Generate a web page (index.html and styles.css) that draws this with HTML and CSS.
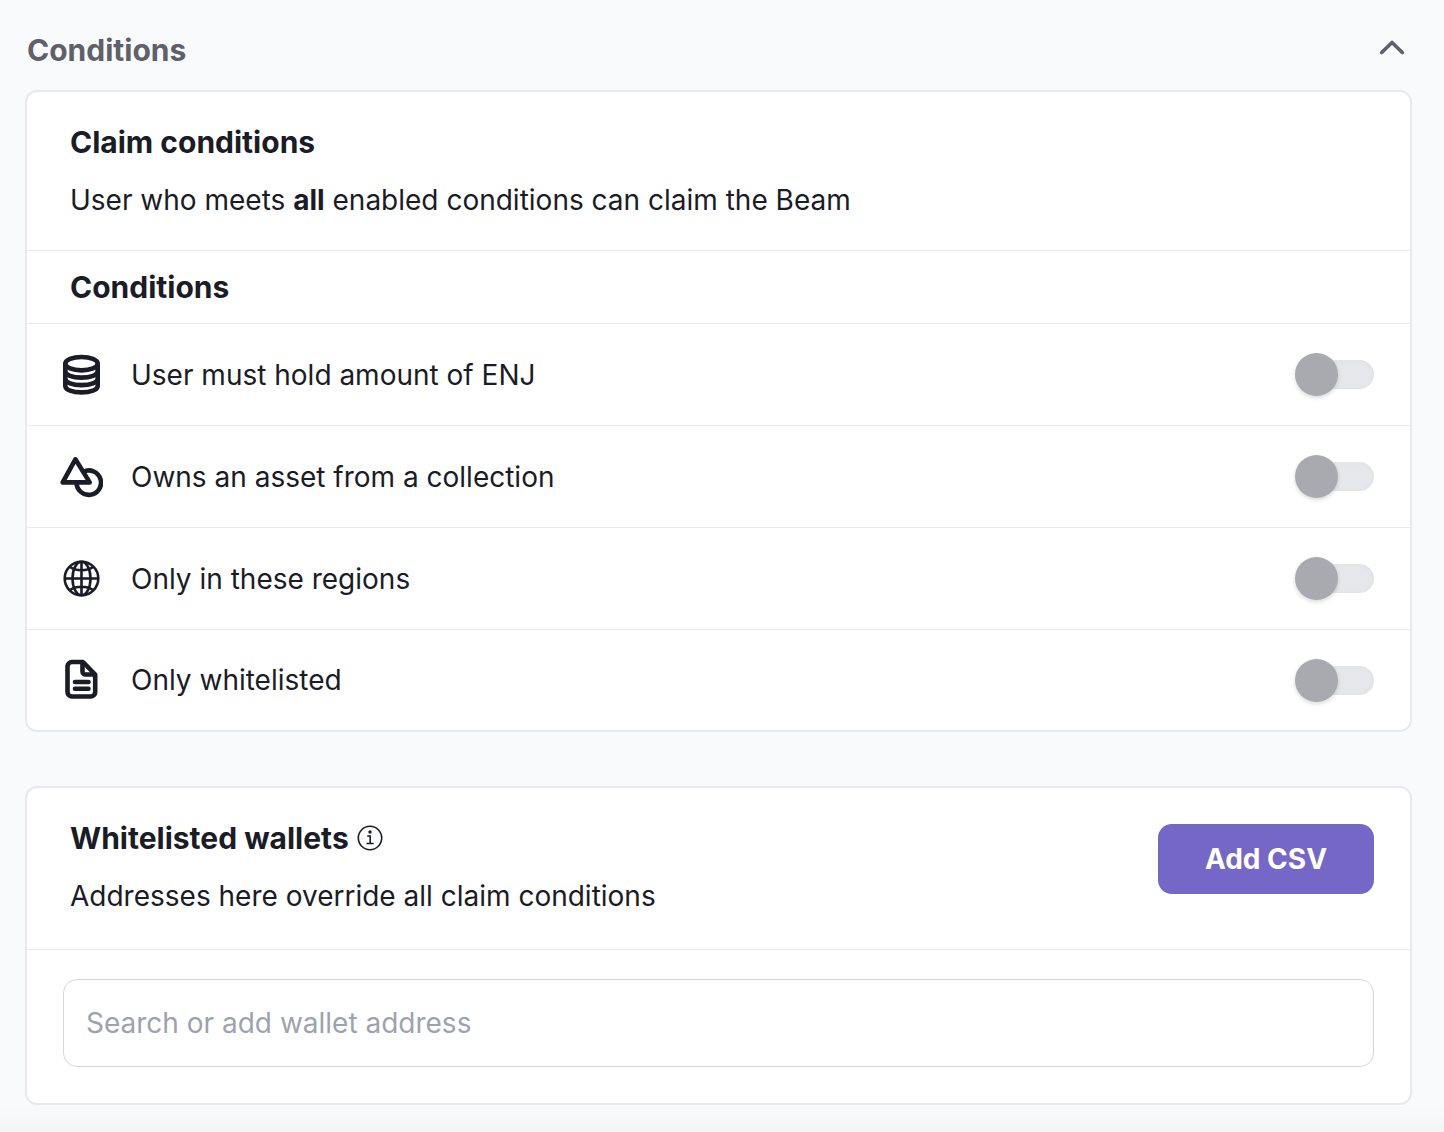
FILE: index.html
```html
<!DOCTYPE html>
<html lang="en">
<head>
  <meta charset="UTF-8">
  <meta name="viewport" content="width=device-width, initial-scale=1.0">
  <title>Conditions</title>
  <link rel="stylesheet" href="styles.css">
</head>

<body>
  <main class="page">
    <header class="section-header">
      <h1 class="section-title">Conditions</h1>
      <button type="button" class="collapse-btn" aria-label="Collapse conditions" aria-expanded="true">
        <svg width="28" height="20" viewBox="0 0 28 20" fill="none" stroke="currentColor" stroke-width="3.600" stroke-linecap="round" stroke-linejoin="round">
          <path d="M3.700 14.500L14 4.500l10.300 10" />
        </svg>
      </button>
    </header>

    <section class="card">
      <div class="card-header">
        <div class="card-heading">
          <h2 class="card-title">Claim conditions</h2>
          <p class="card-text">User who meets <strong>all</strong> enabled conditions can claim the Beam</p>
        </div>
      </div>
      <h3 class="list-title">Conditions</h3>
      <ul class="condition-list">
        <li class="condition">
          <svg class="condition-icon" viewBox="0 0 44 44" fill="none" stroke="currentColor" stroke-width="4.600">
            <ellipse cx="22.500" cy="10.700" rx="16.200" ry="6.700" />
            <path d="M6.300 10.700v22.300c0 3.800 7.200 6.400 16.200 6.400s16.200-2.600 16.200-6.400v-22.300" />
            <path d="M6.300 18.200c0 3.800 7.200 6.400 16.200 6.400s16.200-2.600 16.200-6.400M6.300 25.700c0 3.800 7.200 6.400 16.200 6.400s16.200-2.600 16.200-6.400" />
          </svg>
          <label class="condition-label" for="holdEnj">User must hold amount of ENJ</label>
          <input class="toggle" type="checkbox" role="switch" id="holdEnj">
        </li>
        <li class="condition">
          <svg class="condition-icon" viewBox="0 0 44 44" fill="none" stroke="currentColor" stroke-width="4.600" stroke-linejoin="round">
            <path d="M16.400 4.300L3.700 27.400h27z" />
            <path d="M24.500 16.700a12.200 12.200 0 1 1-6.900 10.900" />
          </svg>
          <label class="condition-label" for="ownsAsset">Owns an asset from a collection</label>
          <input class="toggle" type="checkbox" role="switch" id="ownsAsset">
        </li>
        <li class="condition">
          <svg class="condition-icon" viewBox="0 0 44 44" fill="none" stroke="currentColor" stroke-width="2.600">
            <circle cx="22.500" cy="21.500" r="16.800" />
            <ellipse cx="22.500" cy="21.500" rx="9" ry="16.800" />
            <path d="M22.500 4.700v33.600M5.700 21.500h33.600M11 10c6 4.300 17 4.300 23 0M11 33c6-4.300 17-4.300 23 0" />
          </svg>
          <label class="condition-label" for="regions">Only in these regions</label>
          <input class="toggle" type="checkbox" role="switch" id="regions">
        </li>
        <li class="condition">
          <svg class="condition-icon" viewBox="0 0 44 44" fill="none" stroke="currentColor" stroke-width="4.600" stroke-linecap="round" stroke-linejoin="round">
            <path d="M13 4h11L36.200 16.500v17.500a4.500 4.500 0 0 1-4.500 4.500H13a4.500 4.500 0 0 1-4.500-4.500V8.500a4.500 4.500 0 0 1 4.500-4.500z" />
            <path d="M23.500 5v8.500a3 3 0 0 0 3 3H35M16 24h13.500M16 30.700h13.500" />
          </svg>
          <label class="condition-label" for="whitelisted">Only whitelisted</label>
          <input class="toggle" type="checkbox" role="switch" id="whitelisted">
        </li>
      </ul>
    </section>

    <section class="card">
      <div class="card-header card-header-action">
        <div class="card-heading">
          <h2 class="card-title">Whitelisted wallets
            <svg class="info-icon" viewBox="0 0 26 26" fill="none" stroke="currentColor" stroke-width="1.600">
              <circle cx="13" cy="13" r="11.700" />
              <path d="M10.200 11h3v7.500M9.500 18.500h7.200" />
              <circle cx="13" cy="7" r="1.700" fill="currentColor" stroke="none" />
            </svg>
          </h2>
          <p class="card-text">Addresses here override all claim conditions</p>
        </div>
        <button type="button" class="primary-btn">Add CSV</button>
      </div>
      <div class="card-body">
        <input class="search-input" type="text" placeholder="Search or add wallet address" aria-label="Search or add wallet address">
      </div>
    </section>
  </main>
</body>

</html>
```
FILE: styles.css
```css
:root {
  --primary: #7567c7;
  --background: #f9fafc;
  --surface: #ffffff;
  --text: #1a1c27;
  --text-secondary: #5f606a;
  --placeholder: #9ca3af;
  --border-color: #e8e9ed;
  --input-border: #d6d7da;
  --toggle-track: #e6e7eb;
  --toggle-knob: #a9aab0;
}

* {
  margin: 0;
  padding: 0;
  box-sizing: border-box;
}

body {
  min-height: 100vh;
  font-family: Inter, "Liberation Sans", sans-serif;
  font-size: 28px;
  line-height: 36px;
  color: var(--text);
  background: linear-gradient(to top, #f4f5f7, var(--background) 28px);
  -webkit-font-smoothing: antialiased;
}

.page {
  padding: 32px 32px 27px 25px;
}

.section-header {
  display: flex;
  align-items: center;
  justify-content: space-between;
  padding: 0 6px 0 2px;
  margin-bottom: 22px;
}

.section-title,
.card-title,
.list-title {
  font-size: 30px;
  font-weight: 700;
}

.section-title {
  color: var(--text-secondary);
}

.collapse-btn {
  display: flex;
  padding: 0 0 4px;
  border: none;
  background: none;
  color: var(--text-secondary);
  cursor: pointer;
}

.card {
  background: var(--surface);
  border: 2px solid var(--border-color);
  border-radius: 12px;
}

.card + .card {
  margin-top: 54px;
}

.card-header {
  display: flex;
  align-items: flex-start;
  justify-content: space-between;
  padding: 32px 36px 32px 43px;
  border-bottom: 1px solid var(--border-color);
}

.card-header-action {
  padding-bottom: 35px;
}

.card-heading {
  display: flex;
  flex-direction: column;
  gap: 22px;
}

.card-title {
  display: flex;
  align-items: center;
  gap: 8px;
}

.info-icon {
  width: 26px;
  height: 26px;
}

.list-title {
  padding: 18px 43px;
  border-bottom: 1px solid var(--border-color);
}

.condition-list {
  list-style: none;
}

.condition {
  display: flex;
  align-items: center;
  height: 102px;
  padding: 0 36px 0 32px;
  border-bottom: 1px solid var(--border-color);
}

.condition:last-child {
  height: 100px;
  border-bottom: none;
}

.condition-icon {
  flex-shrink: 0;
  width: 44px;
  height: 44px;
  margin-right: 28px;
}

.condition-label {
  flex: 1;
}

.toggle {
  appearance: none;
  display: flex;
  align-items: center;
  flex-shrink: 0;
  width: 79px;
  height: 43px;
  cursor: pointer;
}

.toggle::before {
  content: "";
  width: 43px;
  height: 43px;
  border-radius: 50%;
  background: var(--toggle-knob);
  box-shadow: 0 2px 4px rgba(0, 0, 0, 0.15);
  z-index: 1;
}

.toggle::after {
  content: "";
  width: 72px;
  height: 29px;
  margin-left: -36px;
  border-radius: 15px;
  background: var(--toggle-track);
  box-shadow: inset 0 0 6px rgba(0, 0, 0, 0.03);
}

.toggle:checked {
  flex-direction: row-reverse;
}

.toggle:checked::before {
  background: var(--primary);
}

.toggle:checked::after {
  margin: 0 -36px 0 0;
}

.primary-btn {
  width: 216px;
  height: 70px;
  margin-top: 4px;
  border: none;
  border-radius: 14px;
  background: var(--primary);
  color: #ffffff;
  font: inherit;
  font-weight: 700;
  cursor: pointer;
}

.card-body {
  padding: 29px 36px 36px;
}

.search-input {
  display: block;
  width: 100%;
  height: 88px;
  padding: 0 22px;
  border: 1px solid var(--input-border);
  border-radius: 14px;
  background: var(--surface);
  color: var(--text);
  font: inherit;
}

.search-input::placeholder {
  color: var(--placeholder);
  opacity: 1;
}
```
